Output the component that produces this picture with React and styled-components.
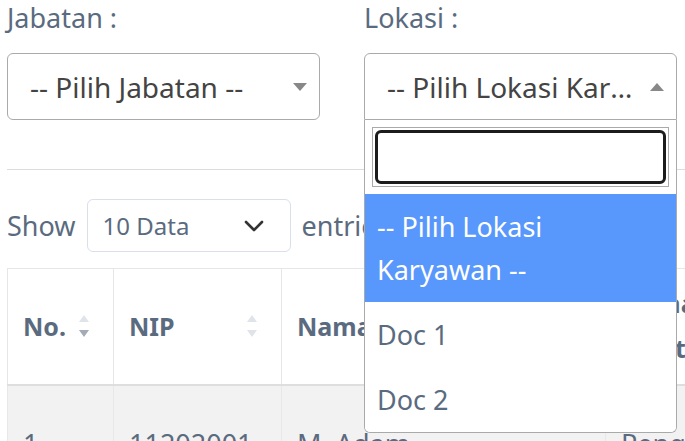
import React from 'react';
import styled, { createGlobalStyle } from 'styled-components';

const GlobalStyle = createGlobalStyle`
  html, body {
    margin: 0;
    padding: 0;
    background: #fff;
    overflow: hidden;
  }
  body {
    font-family: "Noto Sans", "Open Sans", sans-serif;
    color: #5a6b80;
  }
`;

const Page = styled.div`
  width: 900px;
  padding-left: 7px;
`;

const FilterRow = styled.div`
  display: grid;
  grid-template-columns: 313px 313px;
  column-gap: 44px;
`;

const Field = styled.div`
  position: relative;
`;

const Label = styled.div`
  font-size: 27px;
  line-height: 36px;
  color: #5a6b80;
  margin-bottom: 17px;
`;

const Select = styled.div`
  height: 67px;
  box-sizing: border-box;
  border: 1px solid #aaa;
  border-radius: ${p => (p.$open ? '6px 6px 0 0' : '6px')};
  display: flex;
  align-items: center;
  justify-content: space-between;
  padding: 0 12px 0 22px;
  font-size: 28px;
  color: #444;
  background: #fff;
`;

const SelectText = styled.span`
  white-space: nowrap;
  overflow: hidden;
  text-overflow: ellipsis;
`;

const Caret = styled.span`
  flex: none;
  width: 0;
  height: 0;
  margin-left: 12px;
  border-left: 7px solid transparent;
  border-right: 7px solid transparent;
  ${p =>
    p.$up
      ? 'border-bottom: 8px solid #888;'
      : 'border-top: 8px solid #888;'}
`;

const Dropdown = styled.div`
  position: absolute;
  left: 0;
  right: 0;
  top: 120px;
  box-sizing: border-box;
  height: 313px;
  border: 1px solid #aaa;
  border-top: none;
  border-radius: 0 0 6px 6px;
  background: #fff;
  z-index: 10;
  overflow: hidden;
`;

const SearchWrap = styled.div`
  padding: 7px;
`;

const SearchBox = styled.div`
  box-sizing: border-box;
  height: 60px;
  border: 1px solid #aaa;
  padding: 2px;
`;

const SearchFocus = styled.div`
  box-sizing: border-box;
  height: 100%;
  border: 3px solid #1c1c1c;
  border-radius: 6px;
`;

const Option = styled.div`
  padding: 11px 24px 11px 12px;
  font-size: 27px;
  line-height: 43px;
  background: ${p => (p.$active ? '#5897fb' : '#fff')};
  color: ${p => (p.$active ? '#fff' : '#5a6b80')};
`;

const Divider = styled.hr`
  margin: 49px 0 0;
  border: none;
  border-top: 1px solid #dcdcdc;
`;

const LengthRow = styled.div`
  display: flex;
  align-items: center;
  gap: 11px;
  margin-top: 29px;
  font-size: 27px;
  color: #5a6b80;
`;

const LengthSelect = styled.div`
  width: 204px;
  height: 53px;
  box-sizing: border-box;
  border: 1px solid #d9e0ea;
  border-radius: 6px;
  display: flex;
  align-items: center;
  justify-content: space-between;
  padding: 0 26px 0 15px;
  font-size: 24px;
  color: #5a6b80;
`;

const Table = styled.table`
  margin-top: 16px;
  border-collapse: collapse;
  table-layout: fixed;
  width: 758px;
`;

const Th = styled.th`
  height: 116px;
  box-sizing: border-box;
  padding: 0 15px;
  border: 1px solid #e6e6e6;
  border-bottom: 2px solid #dedede;
  text-align: left;
  font-size: 25px;
  font-weight: 700;
  line-height: 45px;
  color: #5a6b80;
`;

const ThInner = styled.div`
  display: flex;
  align-items: center;
  justify-content: space-between;
  padding-right: 9px;
`;

const SortIcons = styled.span`
  display: flex;
  flex-direction: column;
  gap: 8px;
`;

const Tri = styled.span`
  width: 0;
  height: 0;
  border-left: 5px solid transparent;
  border-right: 5px solid transparent;
  ${p =>
    p.$down
      ? `border-top: 7px solid ${p.$on ? '#a3abb6' : '#e0e4e9'};`
      : `border-bottom: 7px solid ${p.$on ? '#a3abb6' : '#e0e4e9'};`}
`;

const Td = styled.td`
  height: 116px;
  padding: 0 15px;
  border: 1px solid #e8e8e8;
  background: #f2f2f2;
  font-size: 27px;
  color: #5a6b80;
  white-space: nowrap;
`;

const Sort = ({ active }) => (
  <SortIcons>
    <Tri />
    <Tri $down $on={active} />
  </SortIcons>
);

const Chevron = () => (
  <svg width="20" height="12" viewBox="0 0 20 12" fill="none">
    <path d="M2 2l8 8 8-8" stroke="#333" strokeWidth="2.6" strokeLinecap="round" strokeLinejoin="round" />
  </svg>
);

export default function App() {
  return (
    <>
      <GlobalStyle />
      <Page>
        <FilterRow>
          <Field>
            <Label>Jabatan :</Label>
            <Select>
              <SelectText>-- Pilih Jabatan --</SelectText>
              <Caret />
            </Select>
          </Field>
          <Field>
            <Label>Lokasi :</Label>
            <Select $open>
              <SelectText>-- Pilih Lokasi Karyawan --</SelectText>
              <Caret $up />
            </Select>
            <Dropdown>
              <SearchWrap>
                <SearchBox>
                  <SearchFocus />
                </SearchBox>
              </SearchWrap>
              <Option $active>-- Pilih Lokasi Karyawan --</Option>
              <Option>Doc 1</Option>
              <Option>Doc 2</Option>
            </Dropdown>
          </Field>
        </FilterRow>

        <Divider />

        <LengthRow>
          <span>Show</span>
          <LengthSelect>
            <span>10 Data</span>
            <Chevron />
          </LengthSelect>
          <span>entries</span>
        </LengthRow>

        <Table>
          <colgroup>
            <col style={{ width: 106 }} />
            <col style={{ width: 168 }} />
            <col style={{ width: 324 }} />
            <col style={{ width: 160 }} />
          </colgroup>
          <thead>
            <tr>
              <Th>
                <ThInner>
                  <span>No.</span>
                  <Sort active />
                </ThInner>
              </Th>
              <Th>
                <ThInner>
                  <span>NIP</span>
                  <Sort />
                </ThInner>
              </Th>
              <Th>
                <ThInner>
                  <span>Nama</span>
                  <Sort />
                </ThInner>
              </Th>
              <Th>
                <ThInner>
                  <span>Nama Jabatan</span>
                  <Sort />
                </ThInner>
              </Th>
            </tr>
          </thead>
          <tbody>
            <tr>
              <Td>1</Td>
              <Td>11202001</Td>
              <Td>M. Adam</Td>
              <Td>Pengawas</Td>
            </tr>
          </tbody>
        </Table>
      </Page>
    </>
  );
}
